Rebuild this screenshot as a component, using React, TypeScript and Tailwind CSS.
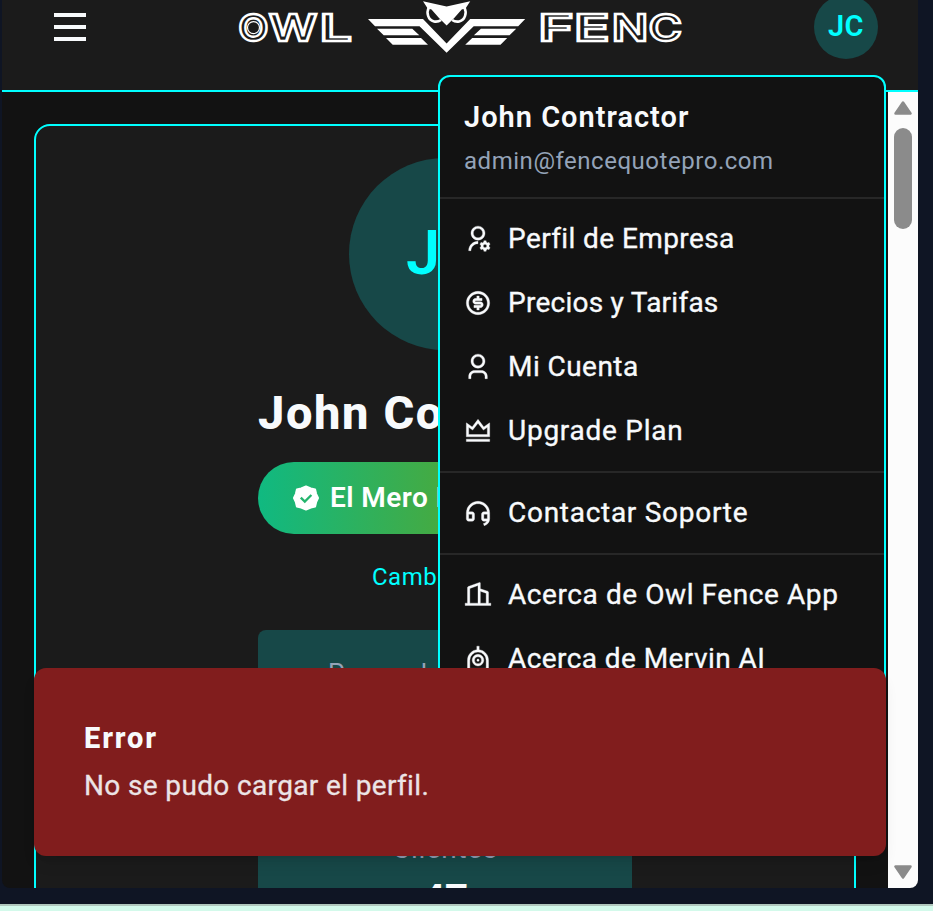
import type { ReactNode } from "react";
import {
  RiBuilding2Line,
  RiCustomerServiceLine,
  RiMoneyDollarCircleLine,
  RiUser3Line,
  RiUserSettingsLine,
  RiVipCrownLine,
} from "react-icons/ri";

function LogoWord({ letters }: { letters: { c: string; x: number; w: number }[] }) {
  return (
    <text
      y={40.8}
      fontFamily="Inter"
      fontWeight={600}
      fontSize={36.4}
      fill="#1b1b1b"
      stroke="#fff"
      strokeWidth={2.3}
    >
      {letters.map((l) => (
        <tspan key={l.c} x={l.x} textLength={l.w} lengthAdjust="spacingAndGlyphs">
          {l.c}
        </tspan>
      ))}
    </text>
  );
}

function Logo() {
  return (
    <svg className="h-[60px] w-[460px] shrink-0" viewBox="230 0 460 60">
      <LogoWord letters={[{ c: "O", x: 238.2, w: 30.2 }, { c: "W", x: 268.8, w: 48.5 }, { c: "L", x: 319.5, w: 32.5 }]} />
      <LogoWord letters={[{ c: "F", x: 538.2, w: 35.4 }, { c: "E", x: 573.9, w: 35.7 }, { c: "N", x: 611.8, w: 36.5 }, { c: "C", x: 648.4, w: 33.6 }]} />
      {/* centre line of the O */}
      <circle cx="253.500" cy="27.600" r="6" fill="none" stroke="#fff" strokeWidth="1.200" />
      <g fill="#fff">
        <path d="M368 19h55l23.600 24.500L470.200 19h55l-7 7.300h-44.500l-27.100 26.500L419.500 26.300h-44.500z" />
        <path d="M377 28.700h35.300l7 6.500h-35.600zM386 38h35l7 6.700h-35.300zM516.200 28.700h-35.300l-7 6.500h35.600zM507.200 38h-35l-7 6.700h35.300z" />
      </g>
      <g fill="none" stroke="#fff" strokeWidth="2.600">
        <path d="M429 7c-3 6-1 13 5 14.500 3 .5 5 0 7-1.500" />
        <path d="M464.200 7c3 6 1 13-5 14.500-3 .5-5 0-7-1.500" />
      </g>
      <path d="M423 1.300l23.600 5.200 23.600-5.200-4.500 7-4 1.200-7.500 8.500-7.600 7.500-7.600-7.500-7.500-8.500-4-1.200z" fill="#fff" />
      <path d="M433 13c-1 3 1 5.500 4.500 5M460.200 13c1 3-1 5.500-4.500 5" fill="none" stroke="#1b1b1b" strokeWidth="2" />
    </svg>
  );
}

function RobotIcon() {
  return (
    <svg className="size-7" viewBox="0 0 24 24" fill="currentColor">
      <path d="M13 4.055c4.500.497 8 4.312 8 8.945v9H3v-9c0-4.633 3.500-8.448 8-8.945V1h2v3.055zM19 20v-7a7 7 0 1 0-14 0v7h14zm-7-2a5 5 0 1 1 0-10 5 5 0 0 1 0 10zm0-2a3 3 0 1 0 0-6 3 3 0 0 0 0 6zm0-2a1 1 0 1 1 0-2 1 1 0 0 1 0 2z" />
    </svg>
  );
}

function VerifiedIcon() {
  return (
    <svg className="size-7 shrink-0" viewBox="0 0 28 28">
      <path
        d="M14 2.500l4.800 2 4.300 1 1 4.300 1.900 4.200-1.900 4.200-1 4.300-4.300 1-4.800 2-4.800-2-4.300-1-1-4.300L2 14l1.900-4.200 1-4.300 4.300-1z"
        fill="#fff"
        stroke="#fff"
        strokeWidth="2"
        strokeLinejoin="round"
      />
      <path d="M8.800 13.600l4 4 6.600-6.600" fill="none" stroke="#24b56d" strokeWidth="2.300" />
    </svg>
  );
}

function Item({ icon, spacing, children }: { icon: ReactNode; spacing: string; children: ReactNode }) {
  return (
    <div className="flex h-16 items-center gap-4 px-6 [&_path]:stroke-current [&_path]:[stroke-width:0.3px]">
      {icon}
      <span className={`whitespace-nowrap text-[28px] leading-10 [-webkit-text-stroke:0.35px_#f8fafc] ${spacing}`}>{children}</span>
    </div>
  );
}

function UserMenu() {
  return (
    <div className="absolute left-[438px] top-[75px] w-[448px] overflow-hidden rounded-xl border-2 border-[#00ffff] bg-[#121212] pb-2">
      <div className="flex h-[122px] flex-col border-b-2 border-[#272727] px-6 pt-5">
        <span className="whitespace-nowrap text-[29px] font-semibold leading-10 tracking-[1px]">John Contractor</span>
        <span className="mt-1 whitespace-nowrap text-[24px] leading-10 tracking-[0.53px] text-[#94a3b8]">admin@fencequotepro.com</span>
      </div>
      <div className="border-b-2 border-[#272727] py-2">
        <Item icon={<RiUserSettingsLine className="size-7" />} spacing="tracking-[0.4px]">Perfil de Empresa</Item>
        <Item icon={<RiMoneyDollarCircleLine className="size-7" />} spacing="tracking-[0.25px]">Precios y Tarifas</Item>
        <Item icon={<RiUser3Line className="size-7" />} spacing="tracking-[0.45px]">Mi Cuenta</Item>
        <Item icon={<RiVipCrownLine className="size-7" />} spacing="tracking-[0.75px]">Upgrade Plan</Item>
      </div>
      <div className="border-b-2 border-[#272727] py-2">
        <Item icon={<RiCustomerServiceLine className="size-7" />} spacing="tracking-[0.72px]">Contactar Soporte</Item>
      </div>
      <div className="pt-2">
        <Item icon={<RiBuilding2Line className="size-7" />} spacing="tracking-[0.58px]">Acerca de Owl Fence App</Item>
        <Item icon={<RobotIcon />} spacing="tracking-[0.43px]">Acerca de Mervin AI</Item>
      </div>
    </div>
  );
}

function Scrollbar() {
  return (
    <div className="flex w-[30px] shrink-0 flex-col items-center bg-[#fcfcfc] pb-[9px] pt-[9px] text-[#8b8b8b]">
      <svg className="h-[14px] w-[18px] shrink-0" viewBox="0 0 18 14"><path d="M9 1.500L16.500 12.500h-15z" fill="currentColor" stroke="currentColor" strokeWidth="2.500" strokeLinejoin="round" /></svg>
      <div className="mt-[13px] h-[101px] w-[18px] shrink-0 rounded-full bg-[#8b8b8b]" />
      <svg className="mt-auto h-[14px] w-[18px] shrink-0" viewBox="0 0 18 14"><path d="M1.500 1.500h15L9 12.500z" fill="currentColor" stroke="currentColor" strokeWidth="2.500" strokeLinejoin="round" /></svg>
    </div>
  );
}

function ProfileCard() {
  return (
    <div className="flex h-[900px] w-[822px] flex-col items-center rounded-2xl border-2 border-[#00ffff] bg-[#1b1b1b] pt-8">
      <div className="flex size-48 shrink-0 items-center justify-center rounded-full bg-[#174848] pr-1 text-[61px] font-semibold text-[#00ffff]">JC</div>
      <div className="mt-[33px] w-[374px] whitespace-nowrap text-[47px] font-extrabold leading-[60px] tracking-[1.600px]">John Contractor</div>
      <div className="mt-[19px] flex h-[72px] w-[374px] shrink-0 items-center rounded-full bg-linear-to-r/srgb from-[#10b981] to-[#7c9b00] pl-[34px]">
        <VerifiedIcon />
        <span className="ml-[10px] whitespace-nowrap text-[28px] font-semibold tracking-[0.45px] text-white">El Mero Patrón</span>
      </div>
      <div className="mt-[23px] w-[146px] whitespace-nowrap text-[24px] leading-10 tracking-[0.500px] text-[#00ffff]">Cambiar Plan</div>
      <div className="mt-[33px] flex h-[150px] w-[374px] shrink-0 flex-col rounded-t-lg bg-[#174848] pl-[70px] pt-[23px] text-[26px] leading-10 tracking-[-0.400px] text-[#94a3b8]">Personal Activo</div>
      <div className="flex h-[150px] w-[374px] shrink-0 flex-col items-center bg-[#174848] pt-[49px]">
        <span className="text-[28px] leading-10 tracking-[0.600px] text-[#94a3b8]">Clientes</span>
        <span className="text-[40px] font-extrabold leading-[62px]">47</span>
      </div>
    </div>
  );
}

export default function App() {
  return (
    <div className="h-[911px] w-[933px] overflow-hidden bg-[#d3faeb] font-['Roboto','Liberation_Sans',sans-serif] text-[#f8fafc]">
      <div className="h-[906px] border-b-2 border-[#b0c7bd] bg-[#0f1524] pl-[2px]">
        <div className="relative h-[888px] w-[916px] overflow-hidden rounded-b-lg bg-[#121212]">
          <header className="flex h-[92px] items-start border-b-2 border-[#00ffff] bg-[#1b1b1b]">
            <div className="ml-[52px] mt-[13px] flex w-8 flex-col gap-2">
              <div className="h-1 bg-[#f8fafc]" />
              <div className="h-1 bg-[#f8fafc]" />
              <div className="h-1 bg-[#f8fafc]" />
            </div>
            <div className="ml-[144px]"><Logo /></div>
            <div className="ml-[124px] mt-[-5px] flex size-16 shrink-0 items-center justify-center rounded-full bg-[#174848] text-[29px] font-semibold tracking-[0.500px] text-[#00ffff]">JC</div>
          </header>
          <main className="flex h-[796px]">
            <div className="w-[886px] overflow-hidden pl-8 pt-8"><ProfileCard /></div>
            <Scrollbar />
          </main>
          <div className="absolute -left-[2px] top-0"><UserMenu /></div>
          <div className="absolute left-8 top-[668px] flex h-[188px] w-[852px] flex-col rounded-xl bg-[#811d1d] pl-[50px] pt-[50px] shadow-lg">
            <span className="text-[29px] font-extrabold leading-10 tracking-[1.900px]">Error</span>
            <span className="mt-2 whitespace-nowrap text-[28px] leading-10 tracking-[0.36px] opacity-90 [-webkit-text-stroke:0.3px_#f8fafc]">No se pudo cargar el perfil.</span>
          </div>
        </div>
      </div>
    </div>
  );
}
